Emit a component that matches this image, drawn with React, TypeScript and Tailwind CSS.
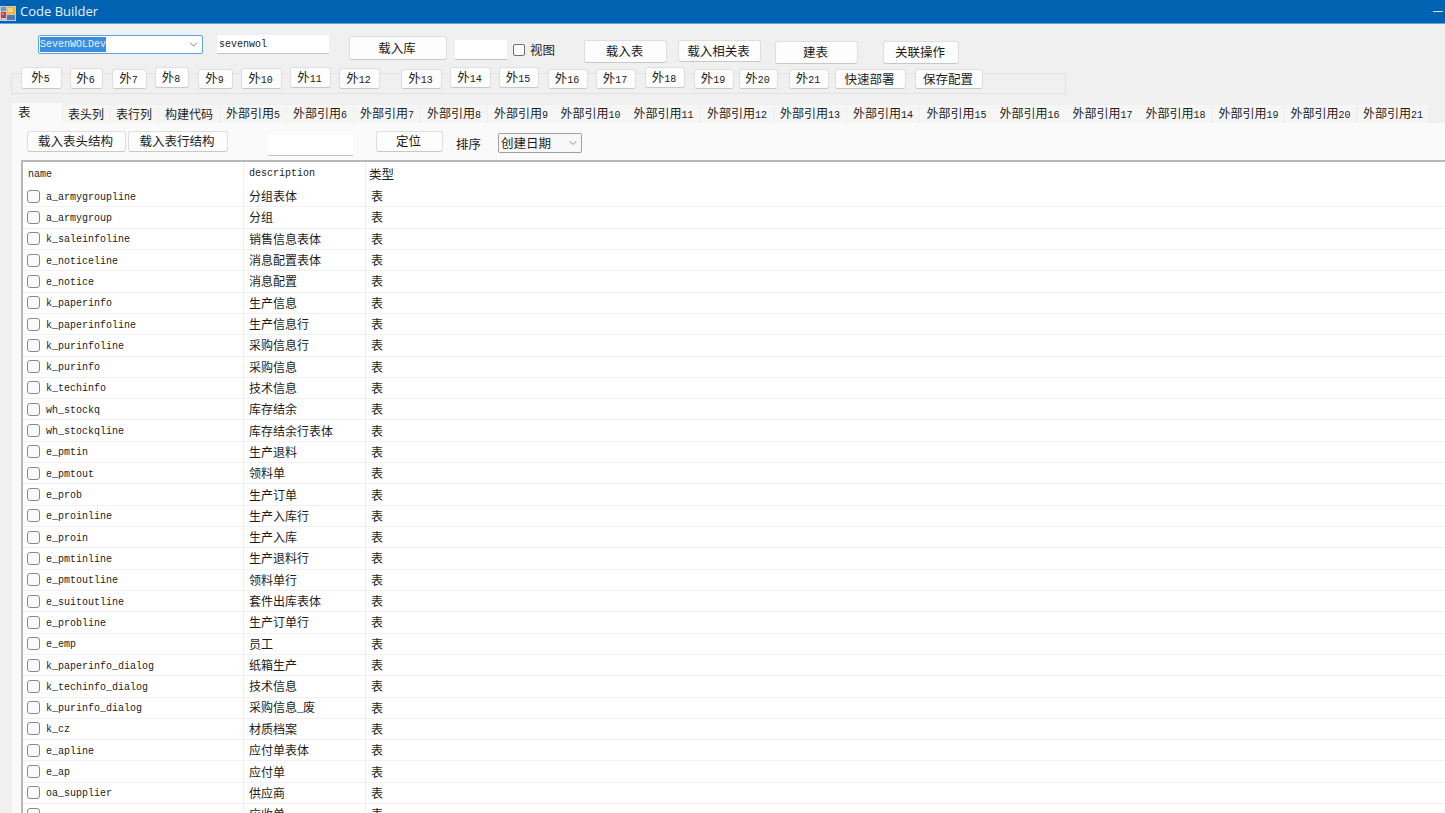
import { ChevronDown } from "lucide-react"

const ROWS: [string, string][] = [
  ["a_armygroupline", "分组表体"],
  ["a_armygroup", "分组"],
  ["k_saleinfoline", "销售信息表体"],
  ["e_noticeline", "消息配置表体"],
  ["e_notice", "消息配置"],
  ["k_paperinfo", "生产信息"],
  ["k_paperinfoline", "生产信息行"],
  ["k_purinfoline", "采购信息行"],
  ["k_purinfo", "采购信息"],
  ["k_techinfo", "技术信息"],
  ["wh_stockq", "库存结余"],
  ["wh_stockqline", "库存结余行表体"],
  ["e_pmtin", "生产退料"],
  ["e_pmtout", "领料单"],
  ["e_prob", "生产订单"],
  ["e_proinline", "生产入库行"],
  ["e_proin", "生产入库"],
  ["e_pmtinline", "生产退料行"],
  ["e_pmtoutline", "领料单行"],
  ["e_suitoutline", "套件出库表体"],
  ["e_probline", "生产订单行"],
  ["e_emp", "员工"],
  ["k_paperinfo_dialog", "纸箱生产"],
  ["k_techinfo_dialog", "技术信息"],
  ["k_purinfo_dialog", "采购信息_废"],
  ["k_cz", "材质档案"],
  ["e_apline", "应付单表体"],
  ["e_ap", "应付单"],
  ["oa_supplier", "供应商"],
  ["", "应收单"],
]

// WinForms layout is not on any grid, so each button carries its own box
const OUTER_BUTTONS: [string, string][] = [
  ["外5", "ml-[9px] mt-[-7px] w-[41px] h-[22px]"],
  ["外6", "ml-[8px] mt-[-6px] w-[33px] h-[21px]"],
  ["外7", "ml-[9px] mt-[-5px] w-[35px] h-[20px]"],
  ["外8", "ml-[8px] mt-[-7px] w-[34px] h-[21px]"],
  ["外9", "ml-[9px] mt-[-5px] w-[35px] h-[20px]"],
  ["外10", "ml-[8px] mt-[-6px] w-[41px] h-[21px]"],
  ["外11", "ml-[8px] mt-[-7px] w-[41px] h-[21px]"],
  ["外12", "ml-[8px] mt-[-6px] w-[41px] h-[21px]"],
  ["外13", "ml-[21px] mt-[-5px] w-[41px] h-[20px]"],
  ["外14", "ml-[8px] mt-[-7px] w-[41px] h-[21px]"],
  ["外15", "ml-[8px] mt-[-7px] w-[40px] h-[21px]"],
  ["外16", "ml-[9px] mt-[-5px] w-[40px] h-[20px]"],
  ["外17", "ml-[8px] mt-[-5px] w-[40px] h-[20px]"],
  ["外18", "ml-[9px] mt-[-7px] w-[40px] h-[21px]"],
  ["外19", "ml-[9px] mt-[-5px] w-[40px] h-[20px]"],
  ["外20", "ml-[5px] mt-[-5px] w-[39px] h-[20px]"],
  ["外21", "ml-[11px] mt-[-5px] w-[40px] h-[20px]"],
  ["快速部署", "ml-[6px] mt-[-5px] w-[71px] h-[20px]"],
  ["保存配置", "ml-[9px] mt-[-5px] w-[68px] h-[20px]"],
]

const TABS: [string, string][] = [
  ["表头列", "w-[46px] ml-px"],
  ["表行列", "w-[48px] ml-px"],
  ["构建代码", "w-[60px] ml-px"],
  ["外部引用5", "w-[66px] ml-px"],
  ["外部引用6", "w-[66px] ml-px"],
  ["外部引用7", "w-[66px] ml-px"],
  ["外部引用8", "w-[66px] ml-px"],
  ["外部引用9", "w-[66px] ml-px"],
  ["外部引用10", "w-[73px]"],
  ["外部引用11", "w-[73px]"],
  ["外部引用12", "w-[72px] ml-px"],
  ["外部引用13", "w-[72px] ml-px"],
  ["外部引用14", "w-[72px] ml-px"],
  ["外部引用15", "w-[73px] ml-px"],
  ["外部引用16", "w-[73px]"],
  ["外部引用17", "w-[73px]"],
  ["外部引用18", "w-[73px]"],
  ["外部引用19", "w-[71px] ml-px"],
  ["外部引用20", "w-[71px] ml-px"],
  ["外部引用21", "w-[70px] ml-[2px]"],
]

const MONO = "font-['Liberation_Mono',monospace] text-[10px] text-[#222]"

// SimSun-like latin next to the CJK glyphs: ascii runs get the mono face at 10px
function Mixed({ text }: { text: string }) {
  const parts = text.match(/[\x00-\x7f]+|[^\x00-\x7f]+/g) ?? []
  return (
    <span>
      {parts.map((part, i) =>
        /^[\x00-\x7f]/.test(part) ? (
          <span key={i} className="font-['Liberation_Mono',monospace] text-[10px] text-[#222]">
            {part}
          </span>
        ) : (
          <span key={i}>{part}</span>
        )
      )}
    </span>
  )
}

function Btn({ label, className }: { label: string; className: string }) {
  return (
    <button className={`shrink-0 flex items-center justify-center rounded-[3px] border border-[#dedede] border-b-[#c8c8c8] bg-[#fdfdfd] pr-[2px] text-[12.5px] leading-none text-[#1c1c1c] ${className}`}>
      <Mixed text={label} />
    </button>
  )
}

function AppIcon() {
  return (
    <svg width="16" height="16" viewBox="0 0 16 16" className="mt-[2px] shrink-0">
      <rect x="0" y="1" width="16" height="15" fill="#c4cad2" />
      <rect x="1" y="2" width="5" height="4" fill="#7f93ad" />
      <rect x="7" y="2" width="8" height="7" fill="#f4b62a" />
      <rect x="8" y="3" width="5" height="4" fill="#fbd66b" />
      <rect x="1" y="7" width="5" height="6" fill="#d5352e" />
      <rect x="2" y="8" width="2" height="2" fill="#f08a80" />
      <rect x="7" y="10" width="8" height="5" fill="#4f78b4" />
    </svg>
  )
}

export default function App() {
  return (
    <div className="flex h-[813px] w-[1445px] flex-col overflow-hidden bg-[#f0f0f0] font-['Noto_Sans_CJK_SC','Liberation_Sans',sans-serif] text-[12px] text-[#1c1c1c]">
      {/* Title bar */}
      <div className="flex h-[24px] shrink-0 items-center border-b border-[#5ea6dc] bg-[#0063b1]">
        <AppIcon />
        <span className="ml-[4px] font-['Open_Sans',sans-serif] text-[13px] text-[#e8f1f9]">Code Builder</span>
        <span className="ml-auto mr-[2px] h-px w-[10px] bg-[#cfe2f2]" />
      </div>

      {/* Connection row */}
      <div className="flex h-[49px] shrink-0 items-start">
        <div className="ml-[38px] mt-[11px] flex h-[19px] w-[165px] items-center rounded-[2px] border border-[#5ba4dc] bg-white pl-[1px]">
          <span className="bg-[#3b8edb] font-['Liberation_Mono',monospace] text-[10px] leading-[15px] text-[#e9f3fb]">SevenWOLDev</span>
          <ChevronDown className="ml-auto mr-[2px] text-[#666]" size={13} strokeWidth={1.5} />
        </div>
        <div className={`ml-[14px] mt-[11px] flex h-[19px] w-[112px] items-center border-b border-[#c4c4c4] bg-white pl-[2px] ${MONO}`}>
          sevenwol
        </div>
        <Btn label="载入库" className="ml-[20px] mt-[12px] h-[24px] w-[98px]" />
        <div className="ml-[8px] mt-[16px] h-[20px] w-[52px] border-b border-[#c4c4c4] bg-white" />
        <span className="ml-[6px] mt-[20px] h-[12px] w-[12px] rounded-[2px] border border-[#707070] bg-white" />
        <span className="ml-[5px] mt-[17px] text-[12.5px] leading-[18px]">视图</span>
        <Btn label="载入表" className="ml-[29px] mt-[16px] h-[23px] w-[83px]" />
        <Btn label="载入相关表" className="ml-[11px] mt-[16px] h-[22px] w-[83px]" />
        <Btn label="建表" className="ml-[14px] mt-[17px] h-[23px] w-[83px]" />
        <Btn label="关联操作" className="ml-[25px] mt-[17px] h-[23px] w-[76px]" />
      </div>

      {/* Outer reference buttons, overlapping the group box edge */}
      <div className="ml-[11px] flex h-[21px] w-[1055px] shrink-0 items-start border border-[#e2e2e2]">
        {OUTER_BUTTONS.map(([label, box]) => (
          <Btn key={label} label={label} className={box} />
        ))}
      </div>

      {/* Tab strip */}
      <div className="ml-[12px] mt-[9px] flex h-[20px] shrink-0 items-end">
        <div className="h-[20px] w-[50px] bg-[#fafafa] pl-[6px] text-[12.5px] leading-[18px]">表</div>
        {TABS.map(([label, box]) => (
          <div key={label} className={`flex h-[18px] items-center justify-center bg-[#f6f6f6] text-[12px] leading-none ${box}`}>
            <Mixed text={label} />
          </div>
        ))}
      </div>

      {/* Tab page */}
      <div className="ml-[12px] flex min-h-0 flex-1 flex-col bg-[#fafafa]">
        <div className="flex h-[37px] shrink-0 items-start">
          <Btn label="载入表头结构" className="ml-[15px] mt-[8px] h-[21px] w-[99px]" />
          <Btn label="载入表行结构" className="ml-[2px] mt-[8px] h-[21px] w-[100px]" />
          <div className="ml-[40px] mt-[12px] h-[21px] w-[85px] border-b border-[#c4c4c4] bg-white" />
          <Btn label="定位" className="ml-[23px] mt-[8px] h-[21px] w-[67px]" />
          <span className="ml-[13px] mt-[12px] w-[25px] text-[12.5px] leading-[17px]">排序</span>
          <div className="ml-[17px] mt-[10px] flex h-[20px] w-[84px] items-center rounded-[2px] border border-[#a0a0a0] bg-[#f8f8f8] pl-[2px] text-[12.5px]">
            创建日期
            <ChevronDown className="ml-auto mr-[2px] text-[#666]" size={12} strokeWidth={1.5} />
          </div>
        </div>

        {/* Table grid */}
        <div className="ml-[9px] min-h-0 flex-1 border-l-2 border-t-2 border-[#b8b8b8] bg-white">
          <div className="flex h-[24px] items-center">
            <span className={`w-[220px] pl-[5px] ${MONO}`}>name</span>
            <span className={`w-[122px] border-l border-[#efefef] pl-[5px] leading-[24px] ${MONO}`}>description</span>
            <span className="border-l border-[#efefef] pl-[3px] text-[12.5px] leading-[24px]">类型</span>
          </div>
          {ROWS.map(([name, desc], i) => (
            <div key={i} className="flex h-[21.32px] items-center border-b border-[#f1f1f1]">
              <div className="flex h-full w-[220px] items-center pl-[4px]">
                <span className="h-[13px] w-[13px] shrink-0 rounded-[3px] border border-[#8a8a8a] bg-[#fbfbfb]" />
                <span className={`ml-[6px] pt-[2px] ${MONO}`}>{name}</span>
              </div>
              <div className="flex h-full w-[122px] items-center border-l border-[#efefef] pl-[5px]">
                <Mixed text={desc} />
              </div>
              <div className="flex h-full items-center border-l border-[#efefef] pl-[5px]">表</div>
            </div>
          ))}
        </div>
      </div>
    </div>
  )
}
